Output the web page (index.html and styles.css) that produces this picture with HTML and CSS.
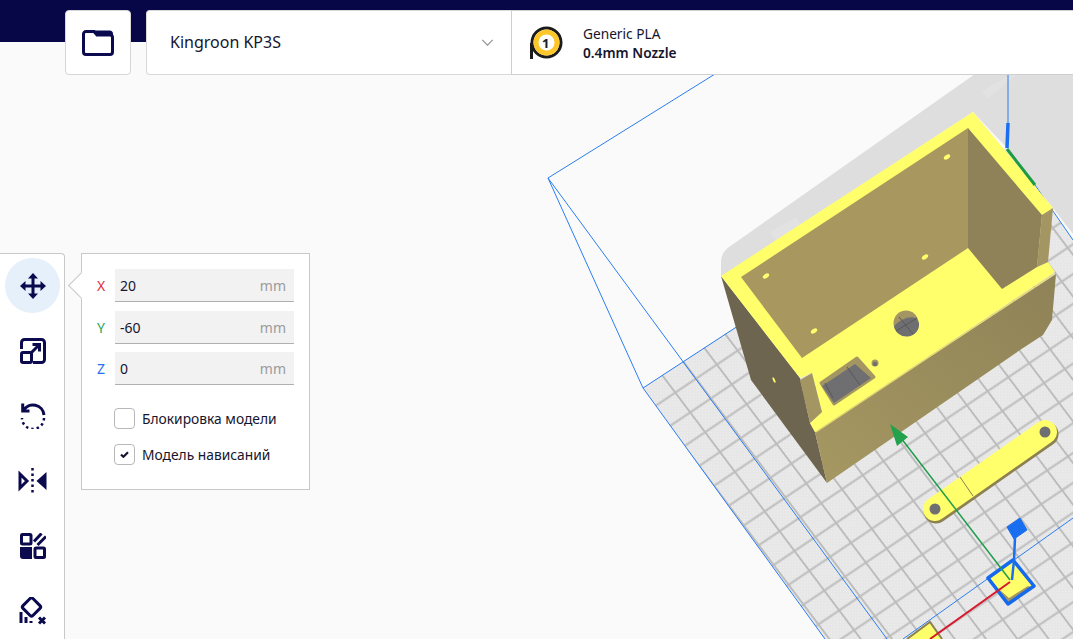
FILE: index.html
```html
<!DOCTYPE html>
<html lang="en">
<head>
  <meta charset="UTF-8" />
  <title>Kingroon KP3S</title>
  <link rel="stylesheet" href="styles.css">
</head>
<body>
  <!-- 3D view -->
  <svg class="scene" viewBox="0 0 1073 639" width="1073" height="639">
    <defs>
      <pattern id="dots" patternUnits="userSpaceOnUse" width="3" height="3">
        <rect class="floor-dot" width="1" height="1" />
      </pattern>
      <pattern id="grid" patternUnits="userSpaceOnUse" width="100" height="100" patternTransform="matrix(.208 -.14 .149 .198 702.150 449.100)">
        <path class="grid-line" d="M0 50H100M50 0V100" />
      </pattern>
      <linearGradient id="front" x1="0" y1="1" x2="1" y2="0">
        <stop offset="0" stop-color="#a69862" />
        <stop offset="1" stop-color="#8e8257" />
      </linearGradient>
    </defs>

    <polygon class="floor" points="643,388 1007,147 1073,240 1073,639 825,639" />
    <polygon class="floor-dots" points="643,388 1007,147 1073,240 1073,639 825,639" />
    <polygon class="floor-lines" points="643,388 1007,147 1073,240 1073,639 825,639" />

    <!-- shadow wall behind the model -->
    <path class="wall-shadow" d="M721 277V262Q721 253 729 247L975 74H1073V234L1035 185 1007 148 973 112Z" />
    <path class="wall-streak" d="M770 232l26-15 9 14-26 15zM982 92l28-18h8l-30 24z" />

    <!-- build volume -->
    <path class="volume" d="M715 74L548 178 643 388 825 639M548 178L887 639M643 388L738 326M903 639L1073 518M1035 185L1073 240M1008 74V125" />

    <!-- box -->
    <polygon class="box-left" points="721,276 751,380 827,483 815,432 810,423 800,378" />
    <polygon class="box-front" points="815,432 1056,274 1052,320 1043,335 1020,350 827,483" />
    <polygon class="box-top" points="721,276 973,112 1053,208 1042,215 1037,267 1048,262 1055,272 815,432 810,423 822,412 812,373 800,378" />
    <polygon class="box-tan" points="800,380 812,373 822,412 810,423" />
    <polygon class="box-tan" points="1042,215 1053,208 1048,262 1037,267" />
    <polygon class="box-wall" points="741,277 968,128 968,248 802,358" />
    <polygon class="box-wall-dark" points="968,128 1042,215 1037,267 1002,289 968,248" />
    <line class="box-bevel" x1="816" y1="432" x2="1054" y2="274" />

    <ellipse class="slot" cx="766" cy="276" rx="3.600" ry="2" transform="rotate(-35 766 276)" />
    <ellipse class="slot" cx="814" cy="331" rx="3.600" ry="2" transform="rotate(-35 814 331)" />
    <ellipse class="slot" cx="925" cy="257" rx="3.600" ry="2" transform="rotate(-35 925 257)" />
    <ellipse class="slot" cx="947" cy="157" rx="3.600" ry="2" transform="rotate(-35 947 157)" />
    <ellipse class="slot" cx="774" cy="380" rx="1" ry="3" transform="rotate(-25 774 380)" />

    <circle class="hole-lip" cx="906" cy="323" r="12.500" />
    <path class="hole" d="M894 326a12.500 12 0 0 0 25 -3q-1 -3 -3 -5q-11 -3 -22 8z" />
    <path class="hole-grid" d="M899 317l14 17M896 331l21 -13" />
    <circle class="hole-lip" cx="875" cy="363" r="3.500" />
    <circle class="hole" cx="875" cy="364" r="2.200" />

    <polygon class="socket-lip" points="821,383 857,358 874,377 834,404" />
    <polygon class="hole" points="822,386 855,364 871,378 834,403" />
    <path class="hole-grid" d="M847 367l13 18M825 383l8 15" />

    <!-- arm -->
    <line class="arm-side" x1="936" y1="511" x2="1046" y2="434" />
    <line class="arm" x1="935" y1="509" x2="1045" y2="432" />
    <line class="arm-cut" x1="960" y1="477" x2="973" y2="496" />
    <circle class="arm-hole" cx="935" cy="509" r="5.500" />
    <circle class="arm-hole" cx="1045" cy="432" r="5.500" />

    <!-- selected part and axes -->
    <polygon class="box-top" points="907,639 930,622 942,639" />
    <path class="small-edge" d="M907 639L930 622 942 639" />
    <polygon class="cube-top" points="988,578 1013,560 1034,586 1008,604" />
    <polygon class="box-tan" points="994,585 1009,598 1028,586 1031,587 1008,603" />
    <polygon class="cube-edge" points="988,578 1013,560 1034,586 1008,604" />
    <path class="axis-green" d="M1010 580L901 438" />
    <polygon class="arrow-green" points="890,424 908,437 897,446" />
    <line class="axis-red" x1="1010" y1="582" x2="930" y2="639" />
    <path class="axis-blue" d="M1012 580L1014 560 1015 538" />
    <polygon class="handle-blue" points="1007,527 1020,518 1027,530 1014,539" />
    <path class="axis-green-thick" d="M1007 149L1035 185" />
    <path class="axis-blue-thick" d="M1007 148L1008 123" />
  </svg>

  <div class="topbar"></div>

  <div class="header">
    <button class="open-button">
      <svg viewBox="0 0 32 28" width="32" height="28">
        <path class="icon-line" d="M4 2.500H12L15 6H28A2.500 2.500 0 0 1 30.500 8.500V23A2.500 2.500 0 0 1 28 25.500H4A2.500 2.500 0 0 1 1.500 23V5A2.500 2.500 0 0 1 4 2.500Z" />
        <path class="icon-fill" d="M11 1.500H27.500A3.500 3.500 0 0 1 31 5V8L28 6H16Z" />
      </svg>
    </button>
    <div class="printer-select">
      <span>Kingroon KP3S</span>
      <svg viewBox="0 0 14 8" width="13" height="7"><path class="chevron" d="M1 1L7 7 13 1" /></svg>
    </div>
    <div class="material">
      <div class="extruder">
        <svg viewBox="0 0 34 34" width="34" height="34">
          <path class="extruder-foot" d="M1.500 17V33" />
          <circle class="extruder-ring" cx="16.500" cy="16.500" r="14.500" />
          <circle class="extruder-yellow" cx="16.500" cy="16.500" r="10.500" />
        </svg>
        <span class="extruder-num">1</span>
      </div>
      <div class="material-text">
        <div>Generic PLA</div>
        <div class="nozzle">0.4mm Nozzle</div>
      </div>
    </div>
  </div>

  <div class="main">
    <div class="toolbar">
      <button class="tool active">
        <svg viewBox="0 0 26 26" width="26" height="26">
          <path class="icon-line" d="M13 3V23M3 13H23" />
          <path class="icon-fill" d="M13 0L18 5.500H8ZM13 26L8 20.500H18ZM0 13L5.500 8V18ZM26 13L20.500 18V8Z" />
        </svg>
      </button>
      <button class="tool">
        <svg viewBox="0 0 26 26" width="26" height="26">
          <path class="icon-line" d="M1.500 11V4.500A3 3 0 0 1 4.500 1.500H21.500A3 3 0 0 1 24.500 4.500V21.500A3 3 0 0 1 21.500 24.500H13" />
          <rect class="icon-line" x="1.500" y="14.500" width="10" height="10" rx="1.500" />
          <path class="icon-line" d="M10 16L19 7M12.500 6.500H19.500V13.500" />
        </svg>
      </button>
      <button class="tool">
        <svg viewBox="0 0 26 27" width="26" height="27">
          <path class="icon-line" d="M3.500 8.500A11 11 0 0 1 24 13" />
          <path class="icon-line" d="M2.700 1.500V9H9.500" />
          <path class="icon-dots" d="M24 16A11 11 0 0 1 2 16" />
        </svg>
      </button>
      <button class="tool">
        <svg viewBox="0 0 30 26" width="30" height="26">
          <path class="icon-dots" d="M14.500 0V26" />
          <path class="icon-line" d="M2 6L9 13 2 20Z" />
          <path class="icon-fill" d="M28.500 4V22L18.500 13Z" />
        </svg>
      </button>
      <button class="tool">
        <svg viewBox="0 0 26 26" width="26" height="26">
          <rect class="icon-line" x="1.500" y="1.500" width="9.500" height="9.500" rx="1" />
          <rect class="icon-line" x="15" y="15" width="9.500" height="9.500" rx="1" />
          <path class="icon-fill" d="M0 14H12V26H3A3 3 0 0 1 0 23Z" />
          <path class="icon-line" d="M14 8.500L21.500 0.500M17.500 12L26 3.500" />
        </svg>
      </button>
      <button class="tool">
        <svg viewBox="0 0 28 28" width="28" height="28">
          <rect class="icon-line" x="5.500" y="3" width="14" height="14" rx="2" transform="rotate(45 12.500 10)" />
          <path class="icon-line" d="M2 15V26M7 20V26M12 24V26" />
          <path class="icon-x" d="M20 20.500L26 26.500M26 20.500L20 26.500" />
        </svg>
      </button>
    </div>

    <div class="panel">
      <div class="fields">
        <div class="field">
          <span class="axis x">X</span>
          <div class="input"><span>20</span><span class="unit">mm</span></div>
        </div>
        <div class="field">
          <span class="axis y">Y</span>
          <div class="input"><span>-60</span><span class="unit">mm</span></div>
        </div>
        <div class="field">
          <span class="axis z">Z</span>
          <div class="input"><span>0</span><span class="unit">mm</span></div>
        </div>
      </div>
      <div class="checks">
        <div class="check"><span class="box"></span>Блокировка модели</div>
        <div class="check"><span class="box">
          <svg viewBox="0 0 10 8" width="9" height="7"><path class="tick" d="M1 4.200L3.800 6.600 9 1.500" /></svg>
        </span>Модель нависаний</div>
      </div>
    </div>
  </div>
</body>
</html>
```

FILE: styles.css
```css
* {
  box-sizing: border-box;
}

body {
  margin: 0;
  width: 1073px;
  height: 639px;
  overflow: hidden;
  position: relative;
  background: #fafafa;
  font-family: "Noto Sans", sans-serif;
  font-size: 14px;
  color: #15152e;
}

/* 3D view */
.scene {
  position: absolute;
  top: 0;
  left: 0;
}

.floor { fill: #e7e7e7; }
.floor-dots { fill: url(#dots); }
.floor-dot { fill: #eeeeee; }
.floor-lines { fill: url(#grid); }
.grid-line { fill: none; stroke: #bcbcbc; stroke-width: 7.500; }
.wall-shadow { fill: #dedede; }
.wall-streak { fill: #e2e2e2; }
.volume { fill: none; stroke: #2b7df2; stroke-width: 1; }

.box-left { fill: #6e6551; }
.box-front { fill: url(#front); }
.box-top { fill: #ffff6b; }
.box-tan { fill: #a39662; }
.box-wall { fill: #a8975f; }
.box-wall-dark { fill: #8f8258; }
.box-bevel { stroke: #e6d96a; stroke-width: 1.5; }
.slot { fill: #ffff6b; }
.hole-lip { fill: #a39662; }
.hole { fill: #6f6f72; }
.hole-grid { fill: none; stroke: #58585a; stroke-width: 1; }
.socket-lip { fill: #a39662; stroke: #a39662; stroke-width: 3; stroke-linejoin: round; }

.arm { stroke: #ffff6b; stroke-width: 24; stroke-linecap: round; }
.arm-side { stroke: #8d8152; stroke-width: 25; stroke-linecap: round; }
.arm-cut { stroke: #8d8152; stroke-width: 1; }
.arm-hole { fill: #6f6f72; }

.small-edge { fill: none; stroke: #8d8152; stroke-width: 2; }
.cube-top { fill: #ffff6b; }
.cube-edge { fill: none; stroke: #1469ee; stroke-width: 3.5; stroke-linejoin: round; }
.axis-green { fill: none; stroke: #1f9d4b; stroke-width: 1.5; }
.arrow-green { fill: #22a24c; }
.axis-red { stroke: #d8182d; stroke-width: 2; }
.axis-blue { fill: none; stroke: #1a6ff0; stroke-width: 2.5; }
.handle-blue { fill: #196ef0; stroke: #196ef0; stroke-width: 1; stroke-linejoin: round; }
.axis-green-thick { stroke: #1c9a45; stroke-width: 3; }
.axis-blue-thick { stroke: #1a6ff0; stroke-width: 3.5; }

/* Top bar */
.topbar {
  position: relative;
  height: 42px;
  background: #070647;
}

.header {
  position: relative;
  display: flex;
  height: 65px;
  margin-top: -32px;
  padding-left: 65px;
}

.open-button {
  width: 66px;
  height: 65px;
  padding: 0;
  margin-right: 15px;
  display: flex;
  align-items: center;
  justify-content: center;
  background: #fff;
  border: 1px solid #d6d6d6;
  border-radius: 4px;
}

.printer-select {
  width: 365px;
  display: flex;
  align-items: center;
  justify-content: space-between;
  padding: 0 17px 1px 23px;
  background: #fff;
  border: 1px solid #d9d9d9;
  border-right: none;
  border-radius: 4px 0 0 4px;
  font-size: 16px;
}

.chevron {
  fill: none;
  stroke: #9a9a9a;
  stroke-width: 1.6;
}

.material {
  flex: 1;
  display: flex;
  align-items: center;
  padding-left: 18px;
  background: #fff;
  border: 1px solid #cfcfcf;
  border-right: none;
}

.extruder {
  position: relative;
  width: 34px;
  height: 34px;
  margin-right: 19px;
}

.extruder-foot { stroke: #1b1b1b; stroke-width: 3; }
.extruder-ring { fill: #fff; stroke: #1b1b1b; stroke-width: 3; }
.extruder-yellow { fill: #fff; stroke: #fdc62b; stroke-width: 5; }

.extruder-num {
  position: absolute;
  top: 8px;
  left: 12px;
  font-size: 13px;
  line-height: 18px;
  font-weight: 700;
  color: #1b1b1b;
}

.material-text {
  font-size: 13.700px;
  line-height: 19px;
}

.nozzle {
  font-weight: 600;
}

/* Left tools */
.main {
  position: absolute;
  top: 253px;
  left: 0;
  display: flex;
  align-items: flex-start;
}

.toolbar {
  width: 65px;
  height: 386px;
  display: flex;
  flex-direction: column;
  gap: 10px;
  padding: 4px 0 0 5px;
  background: #fff;
  border: 1px solid #c8c8c8;
  border-width: 1px 1px 0 0;
  border-top-right-radius: 4px;
}

.tool {
  width: 55px;
  height: 55px;
  flex: none;
  padding: 0;
  display: flex;
  align-items: center;
  justify-content: center;
  background: none;
  border: none;
  border-radius: 50%;
}

.tool.active {
  background: #e5f0fb;
}

.icon-line { fill: none; stroke: #0b0a4e; stroke-width: 3; }
.icon-fill { fill: #0b0a4e; }
.icon-dots { fill: none; stroke: #0b0a4e; stroke-width: 2.500; stroke-dasharray: 2.500 3; }
.icon-x { fill: none; stroke: #0b0a4e; stroke-width: 3; }

/* Move panel */
.panel {
  position: relative;
  width: 229px;
  height: 237px;
  margin-left: 16px;
  padding: 15px 15px 0 15px;
  background: #fff;
  border: 1px solid #c8c8c8;
}

/* arrow towards the active tool */
.panel::before {
  content: "";
  position: absolute;
  top: 22px;
  left: -10px;
  width: 18px;
  height: 18px;
  background: #fff;
  border: 1px solid #c8c8c8;
  border-width: 0 0 1px 1px;
  transform: rotate(45deg);
}

.fields {
  position: relative;
  display: flex;
  flex-direction: column;
  gap: 8.500px;
}

.field {
  display: flex;
  align-items: center;
}

.axis {
  width: 18px;
  font-size: 14px;
}

.axis.x { color: #e0303c; }
.axis.y { color: #2aa55c; }
.axis.z { color: #2a6ff0; }

.input {
  flex: 1;
  height: 33px;
  display: flex;
  align-items: center;
  justify-content: space-between;
  padding: 1px 8px 0 5px;
  background: #f2f2f2;
  border-bottom: 1px solid #b0b0b0;
}

.unit {
  color: #9b9b9b;
}

.checks {
  display: flex;
  flex-direction: column;
  gap: 15px;
  margin: 23px 0 0 17px;
}

.check {
  display: flex;
  align-items: center;
  gap: 7px;
  height: 21px;
  font-size: 13.800px;
}

.box {
  width: 21px;
  height: 21px;
  display: flex;
  align-items: center;
  justify-content: center;
  border: 1px solid #b8b8b8;
  border-radius: 4px;
}

.tick {
  fill: none;
  stroke: #15152e;
  stroke-width: 2.500;
}
```
